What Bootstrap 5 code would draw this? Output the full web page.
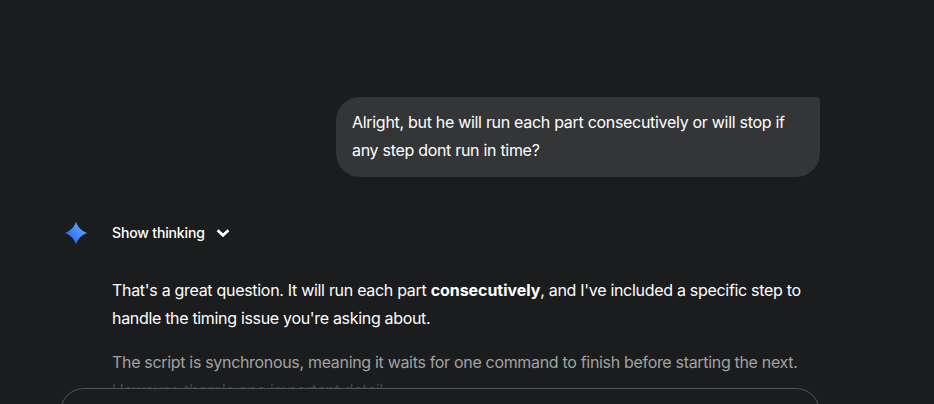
<!DOCTYPE html>
<html lang="en" data-bs-theme="dark">
<head>
<meta charset="utf-8">
<meta name="viewport" content="width=device-width, initial-scale=1">
<title>Chat</title>
<link href="https://cdn.jsdelivr.net/npm/bootstrap@5.3.0/dist/css/bootstrap.min.css" rel="stylesheet">
<style>
  body { background: #1b1c1d; color: #fff; font: 400 16px/28px Inter, "Liberation Sans", sans-serif; }
  .thread { height: 388px; padding: 97px 114px 0 64px; }
  .bubble { width: 484px; height: 80px; padding: 11px 16px 13px; background: #333537; border-radius: 24px 4px 24px 24px; }
  .thinking { margin-top: 44px; height: 24px; font-size: 14px; font-weight: 500; line-height: 24px; letter-spacing: -.15px; }
  .spark { width: 24px; height: 24px; margin-right: 24px; }
  .chevron { width: 14px; height: 10px; margin-left: 11px; }
  .reply { margin: 31px 0 0 48px; }
  .reply p { margin-bottom: 16px; }
  .line { display: block; white-space: nowrap; letter-spacing: -.3px; }
  .line-b { letter-spacing: -.32px; }
  .line strong { letter-spacing: -.05px; }
  .soft { color: #a2a2a3; }
  .faint { background: linear-gradient(#5c5d5e, #343536 60%); -webkit-background-clip: text; background-clip: text; color: transparent; }
  .composer-clip { height: 16px; }
  .composer { width: 760px; height: 64px; margin-left: 60px; border: 1px solid #525455; border-radius: 24px; }
</style>
</head>
<body class="vh-100 overflow-hidden">
<main class="thread overflow-hidden">
  <div class="d-flex justify-content-end">
    <div class="bubble">
      <span class="line">Alright, but he will run each part consecutively or will stop if</span>
      <span class="line">any step dont run in time?</span>
    </div>
  </div>
  <div class="thinking d-flex align-items-center">
    <svg class="spark" viewBox="0 0 24 24" aria-hidden="true">
      <defs><linearGradient id="sparkFill" x1="5" y1="17" x2="18" y2="6" gradientUnits="userSpaceOnUse"><stop stop-color="#2b6bf6"/><stop offset="1" stop-color="#5ba5fb"/></linearGradient></defs>
      <path fill="url(#sparkFill)" d="M12 .8C13.8 6.3 17.7 10.2 23.2 12C17.7 13.8 13.8 17.7 12 23.2C10.2 17.7 6.3 13.8 .8 12C6.3 10.2 10.2 6.3 12 .8Z"/>
    </svg>
    <span>Show thinking</span>
    <svg class="chevron" viewBox="0 0 14 10" fill="none" stroke="#fff" stroke-width="2.7" aria-hidden="true"><path d="M1.6 2.2L7 7.3L12.4 2.2"/></svg>
  </div>
  <div class="reply">
    <p><span class="line">That's a great question. It will run each part <strong>consecutively</strong>, and I've included a specific step to</span>
      <span class="line line-b">handle the timing issue you're asking about.</span></p>
    <p><span class="line line-b soft">The script is synchronous, meaning it waits for one command to finish before starting the next.</span>
      <span class="line line-b faint">However, there's one important detail.</span></p>
  </div>
</main>
<div class="composer-clip overflow-hidden"><div class="composer"></div></div>
<script src="https://cdn.jsdelivr.net/npm/bootstrap@5.3.0/dist/js/bootstrap.bundle.min.js"></script>
</body>
</html>
